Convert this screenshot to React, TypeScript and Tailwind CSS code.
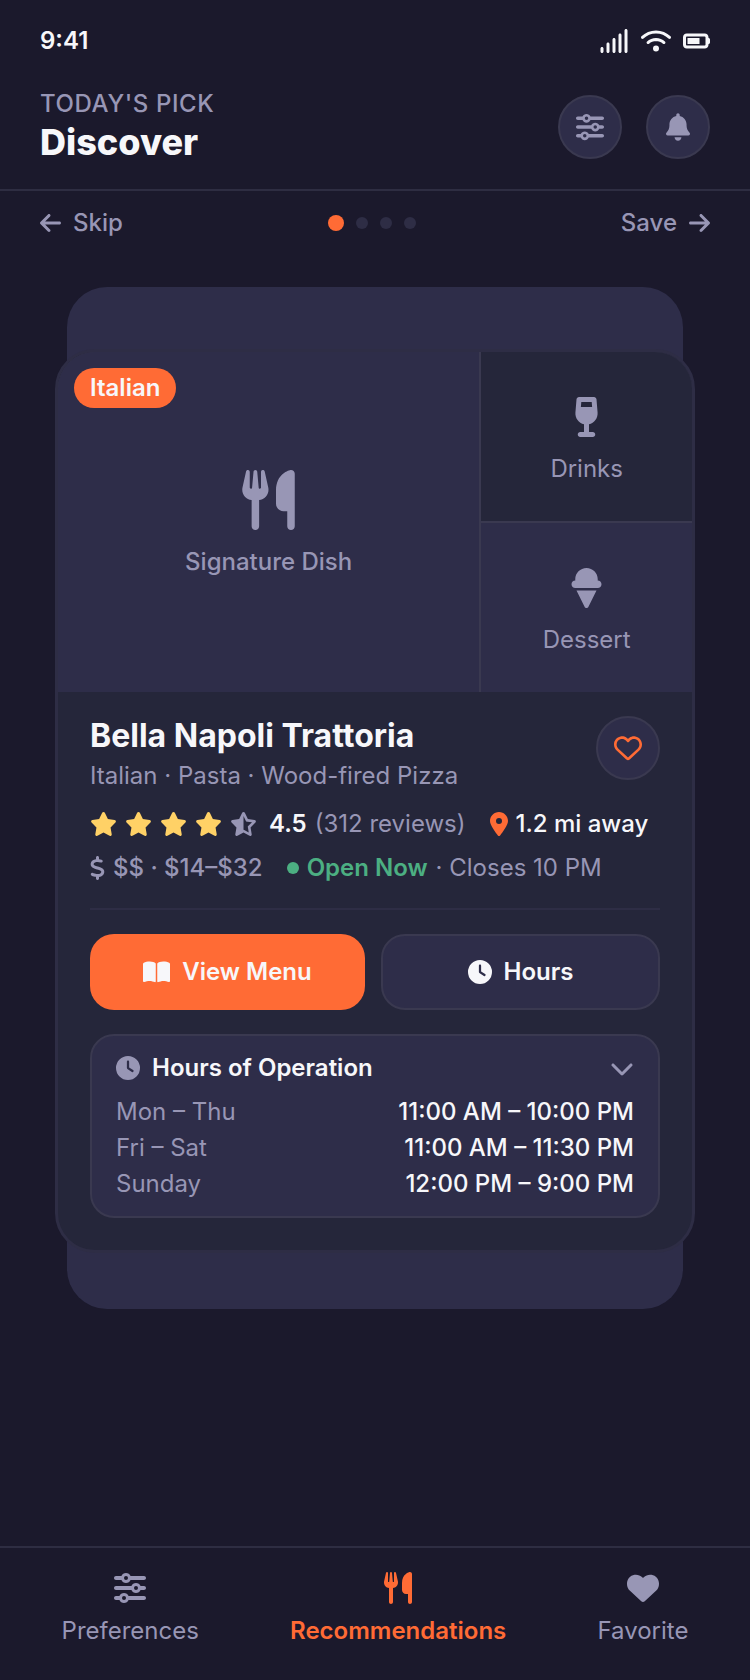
import { useState } from "react";
import {
  FaArrowLeft,
  FaArrowRight,
  FaBatteryThreeQuarters,
  FaBell,
  FaBookOpen,
  FaChevronDown,
  FaClock,
  FaDollarSign,
  FaHeart,
  FaIceCream,
  FaLocationDot,
  FaRegHeart,
  FaSignal,
  FaSliders,
  FaStar,
  FaStarHalfStroke,
  FaUtensils,
  FaWifi,
  FaWineGlass,
} from "react-icons/fa6";

const hours = [
  { days: "Mon – Thu", time: "11:00 AM – 10:00 PM" },
  { days: "Fri – Sat", time: "11:00 AM – 11:30 PM" },
  { days: "Sunday", time: "12:00 PM – 9:00 PM" },
];

const tabs = [
  { label: "Preferences", icon: <FaSliders className="h-8 w-8" /> },
  { label: "Recommendations", icon: <FaUtensils className="h-8 w-7" /> },
  { label: "Favorite", icon: <FaHeart className="h-8 w-8" /> },
];

function StatusBar() {
  return (
    <div className="flex items-center justify-between px-10 pt-[26px] pb-[9px]">
      <span className="font-semibold">9:41</span>
      <div className="flex items-center gap-3">
        <FaSignal className="h-6 w-[30px]" />
        <FaWifi className="h-6 w-[30px]" />
        <FaBatteryThreeQuarters className="h-6 w-[27px]" />
      </div>
    </div>
  );
}

function Header() {
  return (
    <header className="flex items-center justify-between border-b-2 border-[#2e2d42] px-10 pt-6 pb-6">
      <div>
        <p className="font-medium tracking-wide text-[#9896b5]">
          TODAY'S PICK
        </p>
        <h1 className="text-4xl leading-[46px] font-extrabold">Discover</h1>
      </div>
      <div className="flex gap-6">
        <button
          aria-label="Filters"
          className="flex h-16 w-16 items-center justify-center rounded-full border-2 border-[#3a3950] bg-[#2e2d49] text-[#9896b5]"
        >
          <FaSliders className="h-7 w-7" />
        </button>
        <button
          aria-label="Notifications"
          className="flex h-16 w-16 items-center justify-center rounded-full border-2 border-[#3a3950] bg-[#2e2d49] text-[#9896b5]"
        >
          <FaBell className="h-7 w-6" />
        </button>
      </div>
    </header>
  );
}

function SwipeBar() {
  return (
    <div className="flex items-center justify-between px-10 py-[17px] font-medium text-[#9896b5]">
      <button className="flex items-center gap-3">
        <FaArrowLeft className="h-6 w-[21px]" />
        Skip
      </button>
      <div className="flex items-center gap-3">
        <span className="h-4 w-4 rounded-full bg-[#ff6b35]" />
        <span className="h-3 w-3 rounded-full bg-[#2e2d45]" />
        <span className="h-3 w-3 rounded-full bg-[#2e2d45]" />
        <span className="h-3 w-3 rounded-full bg-[#2e2d45]" />
      </div>
      <button className="flex items-center gap-3">
        Save
        <FaArrowRight className="h-6 w-[21px]" />
      </button>
    </div>
  );
}

function Gallery() {
  return (
    <div className="grid h-[340px] grid-cols-[2fr_1fr] grid-rows-2 gap-[2px] bg-[#3a3950] leading-6 text-[#9896b5]">
      <div className="relative row-span-2 flex flex-col items-center justify-center gap-5 bg-[#2e2d49]">
        <span className="absolute top-4 left-4 rounded-full bg-[#ff6b35] px-4 py-2 font-semibold text-[#f7f7fa]">
          Italian
        </span>
        <FaUtensils className="h-[60px] w-[53px]" />
        <span className="font-medium">Signature Dish</span>
      </div>
      <div className="flex flex-col items-center justify-center gap-5 bg-[#25263a] pt-1">
        <FaWineGlass className="h-10 w-[25px]" />
        <span>Drinks</span>
      </div>
      <div className="flex flex-col items-center justify-center gap-5 bg-[#2e2d49] pt-1">
        <FaIceCream className="h-10 w-[35px]" />
        <span>Dessert</span>
      </div>
    </div>
  );
}

function HoursPanel() {
  const [open, setOpen] = useState(true);

  return (
    <section className="mt-6 rounded-3xl border-2 border-[#3a3950] bg-[#2e2d49] px-6 pt-[17px] pb-[14px]">
      <button
        aria-expanded={open}
        onClick={() => setOpen(!open)}
        className="flex w-full items-center justify-between"
      >
        <span className="flex items-center gap-3 font-semibold">
          <FaClock className="h-6 w-6 text-[#9896b5]" />
          Hours of Operation
        </span>
        <FaChevronDown className="h-6 w-6 text-[#9896b5]" />
      </button>
      {open && (
        <table className="mt-[11px] w-full leading-9">
          <tbody>
            {hours.map((row) => (
              <tr key={row.days}>
                <th
                  scope="row"
                  className="p-0 text-left font-normal text-[#9896b5]"
                >
                  {row.days}
                </th>
                <td className="p-0 text-right font-medium">{row.time}</td>
              </tr>
            ))}
          </tbody>
        </table>
      )}
    </section>
  );
}

function RestaurantCard() {
  const [liked, setLiked] = useState(false);

  return (
    <div className="mx-[67px] mt-8 rounded-[40px] bg-[#2e2d49] pt-[62px] pb-14">
      <article className="-mx-3 overflow-hidden rounded-[40px] border-3 border-[#2e2d45] bg-[#25263a]">
        <Gallery />
        <div className="px-8 pt-6 pb-8">
          <div className="flex items-start justify-between">
            <div>
              <h2 className="text-[32px] leading-10 font-bold">
                Bella Napoli Trattoria
              </h2>
              <p className="mt-[5px] text-[#9896b5]">
                Italian · Pasta · Wood-fired Pizza
              </p>
            </div>
            <button
              aria-label="Add to favorites"
              onClick={() => setLiked(!liked)}
              className="flex h-16 w-16 items-center justify-center rounded-full border-2 border-[#3a3950] bg-[#2e2d49] text-[#ff6b35]"
            >
              {liked ? (
                <FaHeart className="h-7 w-7" />
              ) : (
                <FaRegHeart className="h-7 w-7" />
              )}
            </button>
          </div>

          <div className="mt-[18px] flex items-center">
            <div className="flex gap-2 text-[#ffd166]">
              <FaStar className="h-6 w-[27px]" />
              <FaStar className="h-6 w-[27px]" />
              <FaStar className="h-6 w-[27px]" />
              <FaStar className="h-6 w-[27px]" />
              <FaStarHalfStroke className="h-6 w-[27px] text-[#9896b5]" />
            </div>
            <span className="ml-3 font-semibold">4.5</span>
            <span className="ml-2 text-[#9896b5]">(312 reviews)</span>
            <span className="ml-6 flex items-center gap-2 font-medium">
              <FaLocationDot className="h-6 w-[18px] text-[#ff6b35]" />
              1.2 mi away
            </span>
          </div>

          <div className="mt-[14px] flex items-center text-[#9896b5]">
            <span className="flex items-center gap-2 font-medium">
              <FaDollarSign className="h-6 w-[15px]" />
              $$ · $14–$32
            </span>
            <span className="ml-6 h-3 w-3 rounded-full bg-[#4caf82]" />
            <span className="ml-2 font-semibold text-[#4caf82]">Open Now</span>
            <span className="ml-2">· Closes 10 PM</span>
          </div>

          <hr className="mt-[25px] border-t-2 border-[#2e2d45]" />

          <div className="mt-6 flex gap-4 font-semibold">
            <button className="flex h-[76px] flex-1 items-center justify-center gap-3 rounded-3xl bg-[#ff6b35] px-4">
              <FaBookOpen className="h-6 w-[27px]" />
              View Menu
            </button>
            <button className="flex h-[76px] flex-1 items-center justify-center gap-3 rounded-3xl border-2 border-[#3a3950] bg-[#2e2d49] px-4">
              <FaClock className="h-6 w-6" />
              Hours
            </button>
          </div>

          <HoursPanel />
        </div>
      </article>
    </div>
  );
}

function TabBar() {
  const [active, setActive] = useState("Recommendations");

  return (
    <nav className="mt-auto flex justify-around border-t-2 border-[#2e2d42] px-4 pt-6 pb-[34px]">
      {tabs.map((tab) => (
        <button
          key={tab.label}
          onClick={() => setActive(tab.label)}
          className={`flex flex-col items-center gap-3 ${
            active === tab.label
              ? "font-semibold text-[#ff6b35]"
              : "text-[#9896b5]"
          }`}
        >
          {tab.icon}
          {tab.label}
        </button>
      ))}
    </nav>
  );
}

export default function App() {
  return (
    <div className="flex min-h-screen flex-col bg-[#1b192c] font-[Inter,sans-serif] text-2xl leading-[30px] text-[#f7f7fa]">
      <StatusBar />
      <Header />
      <SwipeBar />
      <RestaurantCard />
      <TabBar />
    </div>
  );
}
